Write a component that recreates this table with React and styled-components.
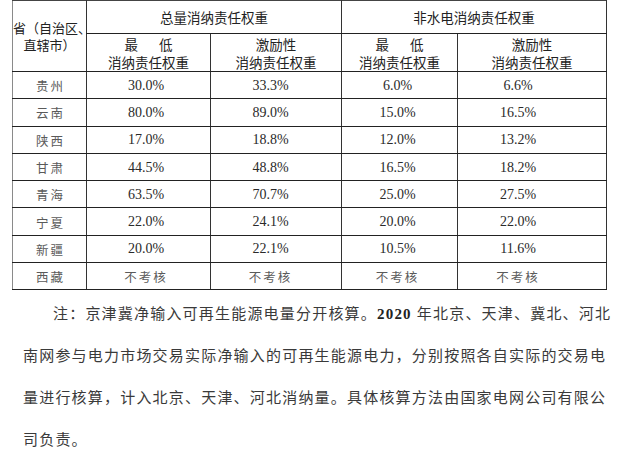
import React from "react";
import styled, { createGlobalStyle } from "styled-components";

const GlobalStyle = createGlobalStyle`
  html, body {
    margin: 0;
    padding: 0;
    background: #ffffff;
  }
  body {
    font-family: "Liberation Serif", "Noto Sans CJK SC", serif;
  }
`;

const rows = [
  { name: "贵州", a: "30.0%", b: "33.3%", c: "6.0%", d: "6.6%" },
  { name: "云南", a: "80.0%", b: "89.0%", c: "15.0%", d: "16.5%" },
  { name: "陕西", a: "17.0%", b: "18.8%", c: "12.0%", d: "13.2%" },
  { name: "甘肃", a: "44.5%", b: "48.8%", c: "16.5%", d: "18.2%" },
  { name: "青海", a: "63.5%", b: "70.7%", c: "25.0%", d: "27.5%" },
  { name: "宁夏", a: "22.0%", b: "24.1%", c: "20.0%", d: "22.0%" },
  { name: "新疆", a: "20.0%", b: "22.1%", c: "10.5%", d: "11.6%" },
  { name: "西藏", a: "不考核", b: "不考核", c: "不考核", d: "不考核" },
];

// right padding pushes the value a bit left of centre, like the scan
const shift = [5, 11, 4, 28];

const Page = styled.div`
  width: 617px;
  height: 458px;
  overflow: hidden;
  padding: 0 0 0 12px;
  box-sizing: border-box;
`;

const Table = styled.table`
  border-collapse: collapse;
  table-layout: fixed;
  width: 594px;
  border-top: 1px solid #444;
  border-right: 1px solid #333;
  border-left: 1px solid #8a8a8a;
  border-bottom: 1px solid #9a9a9a;
`;

const Head = styled.th`
  font-family: "Noto Sans CJK SC", sans-serif;
  font-weight: 400;
  font-size: 13.5px;
  line-height: 18px;
  color: #222;
  text-align: center;
  vertical-align: middle;
  padding: 0;
  height: ${({ $h }) => $h}px;
  border-left: 1px solid #333;
  border-bottom: 1px solid #222;
`;

const RegionHead = styled(Head)`
  font-size: 13px;
  line-height: 17px;
  border-left: none;
  span {
    display: block;
    white-space: nowrap;
  }
`;

const Spaced = styled.span`
  word-spacing: 18px;
`;

const Cell = styled.td`
  font-family: "Liberation Serif", "Noto Sans CJK SC", serif;
  font-size: 14px;
  color: #2a2a2a;
  text-align: center;
  vertical-align: middle;
  padding: 1px ${({ $pr }) => $pr}px 0 0;
  height: 25.3px;
  border-left: 1px solid #333;
  border-bottom: 1px solid #222;
`;

const Soft = styled.span`
  font-family: "Noto Sans CJK SC", sans-serif;
  font-size: 12.5px;
  letter-spacing: 2px;
  color: #5a5a5a;
`;

const Region = styled(Cell)`
  border-left: none;
  padding: 1px 0 0 2px;
`;

const Note = styled.div`
  margin: 3px 0 0 11px;
  width: 580px;
  font-family: "Liberation Serif", "Noto Sans CJK SC", serif;
  font-size: 15px;
  line-height: 42px;
  color: #3a3a3a;
  b {
    font-weight: 700;
    color: #222;
  }
`;

const Line = styled.span`
  display: block;
  white-space: nowrap;
  text-align: ${({ $last }) => ($last ? "left" : "justify")};
  text-align-last: ${({ $last }) => ($last ? "left" : "justify")};
  padding-left: ${({ $indent }) => ($indent ? 30 : 0)}px;
  letter-spacing: 1.2px;
`;

const noteLines = [
  <>
    注：京津冀净输入可再生能源电量分开核算。<b>2020</b> 年北京、天津、冀北、河北
  </>,
  "南网参与电力市场交易实际净输入的可再生能源电力，分别按照各自实际的交易电",
  "量进行核算，计入北京、天津、河北消纳量。具体核算方法由国家电网公司有限公",
  "司负责。",
];

const Value = ({ v, pr }) =>
  v === "不考核" ? (
    <Cell $pr={pr}>
      <Soft>{v}</Soft>
    </Cell>
  ) : (
    <Cell $pr={pr}>{v}</Cell>
  );

export default function App() {
  return (
    <Page>
      <GlobalStyle />
      <Table>
        <colgroup>
          <col style={{ width: 74 }} />
          <col style={{ width: 124 }} />
          <col style={{ width: 131 }} />
          <col style={{ width: 116 }} />
          <col style={{ width: 149 }} />
        </colgroup>
        <thead>
          <tr>
            <RegionHead rowSpan={2} $h={32}>
              <span>省（自治区、</span>
              <span>直辖市）</span>
            </RegionHead>
            <Head colSpan={2} $h={32}>总量消纳责任权重</Head>
            <Head colSpan={2} $h={32}>非水电消纳责任权重</Head>
          </tr>
          <tr>
            <Head $h={37}>
              <Spaced>最 低</Spaced>
              <br />
              消纳责任权重
            </Head>
            <Head $h={37}>
              激励性
              <br />
              消纳责任权重
            </Head>
            <Head $h={37}>
              <Spaced>最 低</Spaced>
              <br />
              消纳责任权重
            </Head>
            <Head $h={37}>
              激励性
              <br />
              消纳责任权重
            </Head>
          </tr>
        </thead>
        <tbody>
          {rows.map((r) => (
            <tr key={r.name}>
              <Region>
                <Soft>{r.name}</Soft>
              </Region>
              <Value v={r.a} pr={shift[0]} />
              <Value v={r.b} pr={shift[1]} />
              <Value v={r.c} pr={shift[2]} />
              <Value v={r.d} pr={shift[3]} />
            </tr>
          ))}
        </tbody>
      </Table>
      <Note>
        {noteLines.map((l, i) => (
          <Line key={i} $indent={i === 0} $last={i === noteLines.length - 1}>
            {l}
          </Line>
        ))}
      </Note>
    </Page>
  );
}
